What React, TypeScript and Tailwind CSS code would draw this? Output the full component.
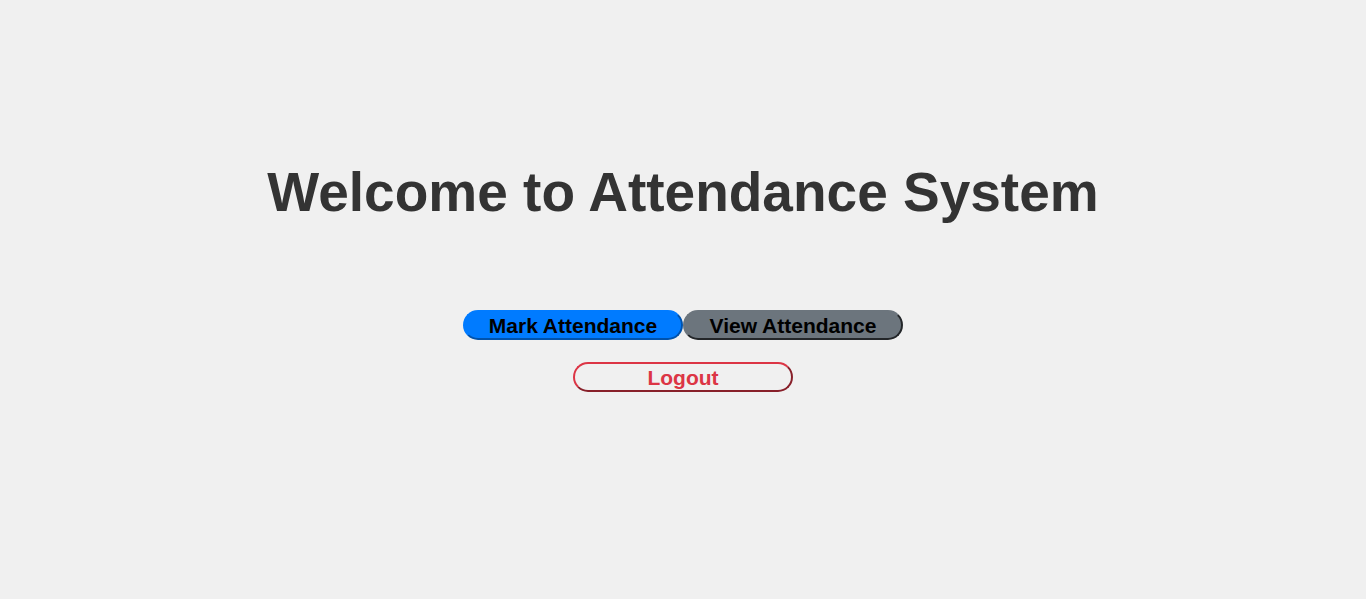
export default function App() {
  return (
    <div className="min-h-[599px] bg-[#f0f0f0] flex flex-col items-center pt-[157px] font-['Liberation_Sans',Arial,sans-serif]">
      <h1 className="text-[55px] font-bold text-[#333333] leading-[70px]">Welcome to Attendance System</h1>
      <div className="mt-[83px] flex">
        <button className="w-[220px] h-[30px] rounded-[15px] border-2 [border-style:outset] border-[#007bff] bg-[#007bff] text-black text-[21px] font-bold leading-none">
          Mark Attendance
        </button>
        <button className="w-[220px] h-[30px] rounded-[15px] border-2 [border-style:outset] border-[#6c757d] bg-[#6c757d] text-black text-[21px] font-bold leading-none">
          View Attendance
        </button>
      </div>
      <button className="mt-[22px] w-[220px] h-[30px] rounded-[15px] border-2 [border-style:outset] border-[#dc3545] bg-transparent text-[#dc3545] text-[21px] font-bold leading-none">
        Logout
      </button>
    </div>
  );
}
